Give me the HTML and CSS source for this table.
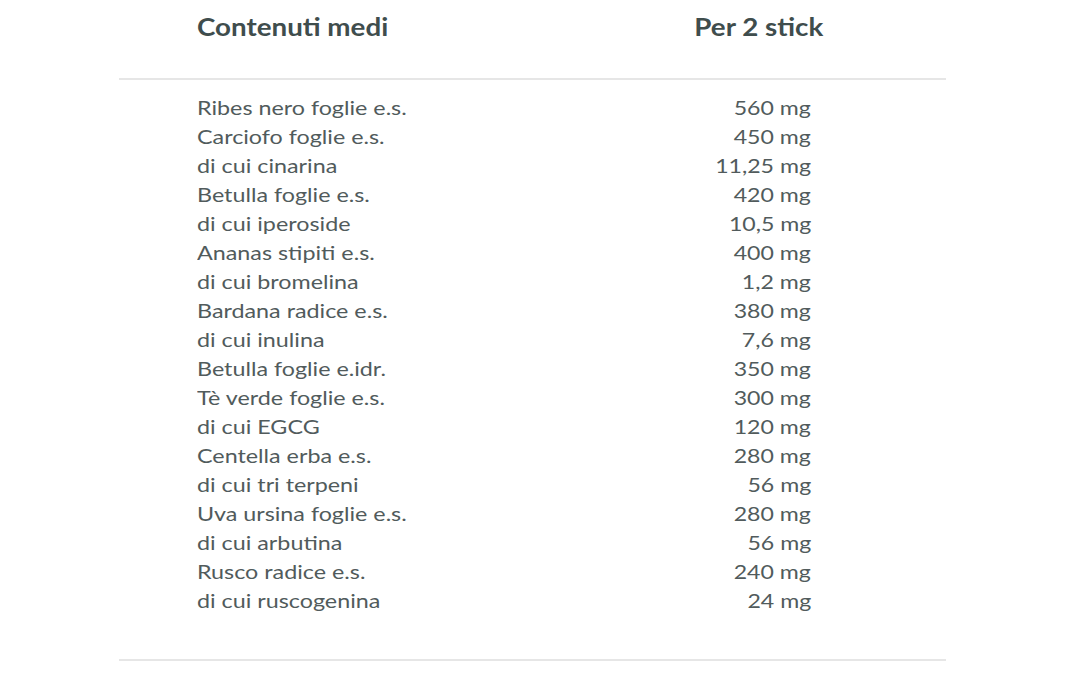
FILE: index.html
```html
<!DOCTYPE html>
<html lang="it">
<head>
<meta charset="utf-8">
<link rel="stylesheet" href="styles.css">
</head>
<body>
<div class="table">
  <div class="head">
    <div class="col-name"><span class="txt">Contenuti medi</span></div>
    <div class="col-val"><span class="txt">Per 2 stick</span></div>
  </div>
  <div class="rows">
    <div class="row"><span class="name">Ribes nero foglie e.s.</span><span class="val"><span class="txt">560 mg</span></span></div>
    <div class="row"><span class="name">Carciofo foglie e.s.</span><span class="val"><span class="txt">450 mg</span></span></div>
    <div class="row"><span class="name">di cui cinarina</span><span class="val"><span class="txt">11,25 mg</span></span></div>
    <div class="row"><span class="name">Betulla foglie e.s.</span><span class="val"><span class="txt">420 mg</span></span></div>
    <div class="row"><span class="name">di cui iperoside</span><span class="val"><span class="txt">10,5 mg</span></span></div>
    <div class="row"><span class="name">Ananas stipiti e.s.</span><span class="val"><span class="txt">400 mg</span></span></div>
    <div class="row"><span class="name">di cui bromelina</span><span class="val"><span class="txt">1,2 mg</span></span></div>
    <div class="row"><span class="name">Bardana radice e.s.</span><span class="val"><span class="txt">380 mg</span></span></div>
    <div class="row"><span class="name">di cui inulina</span><span class="val"><span class="txt">7,6 mg</span></span></div>
    <div class="row"><span class="name">Betulla foglie e.idr.</span><span class="val"><span class="txt">350 mg</span></span></div>
    <div class="row"><span class="name">Tè verde foglie e.s.</span><span class="val"><span class="txt">300 mg</span></span></div>
    <div class="row"><span class="name">di cui EGCG</span><span class="val"><span class="txt">120 mg</span></span></div>
    <div class="row"><span class="name">Centella erba e.s.</span><span class="val"><span class="txt">280 mg</span></span></div>
    <div class="row"><span class="name">di cui tri terpeni</span><span class="val"><span class="txt">56 mg</span></span></div>
    <div class="row"><span class="name">Uva ursina foglie e.s.</span><span class="val"><span class="txt">280 mg</span></span></div>
    <div class="row"><span class="name">di cui arbutina</span><span class="val"><span class="txt">56 mg</span></span></div>
    <div class="row"><span class="name">Rusco radice e.s.</span><span class="val"><span class="txt">240 mg</span></span></div>
    <div class="row"><span class="name">di cui ruscogenina</span><span class="val"><span class="txt">24 mg</span></span></div>
  </div>
</div>
</body>
</html>
```

FILE: styles.css
```css
html, body {
  margin: 0;
  padding: 0;
  background: #ffffff;
}
body {
  font-family: Lato, "Open Sans", sans-serif;
  color: #515b5c;
}
.table {
  width: 827px;
  margin-left: 119px;
}
.head {
  display: flex;
  align-items: center;
  height: 53px;
  border-bottom: 2px solid #e6e6e6;
  padding-left: 78px;
  padding-bottom: 25px;
  font-weight: 700;
  font-size: 24px;
  color: #3f4d4d;
}
.head .txt {
  display: inline-block;
  transform: scaleX(1.156);
}
.head .col-name {
  width: 498px;
}
.head .col-name .txt {
  transform-origin: left center;
}
.head .col-val {
  width: 128px;
  text-align: center;
}
.head .col-val .txt {
  transform-origin: center center;
}
.rows {
  padding: 13px 0 44px 78px;
  border-bottom: 2px solid #e6e6e6;
}
.row {
  display: flex;
  font-size: 20px;
  line-height: 29px;
  height: 29px;
}
.row .name {
  width: 440px;
  display: inline-block;
  transform: scaleX(1.165);
  transform-origin: left center;
}
.row .val {
  width: 174px;
  text-align: right;
}
.row .val .txt {
  display: inline-block;
  transform: scaleX(1.155);
  transform-origin: right center;
}
```
